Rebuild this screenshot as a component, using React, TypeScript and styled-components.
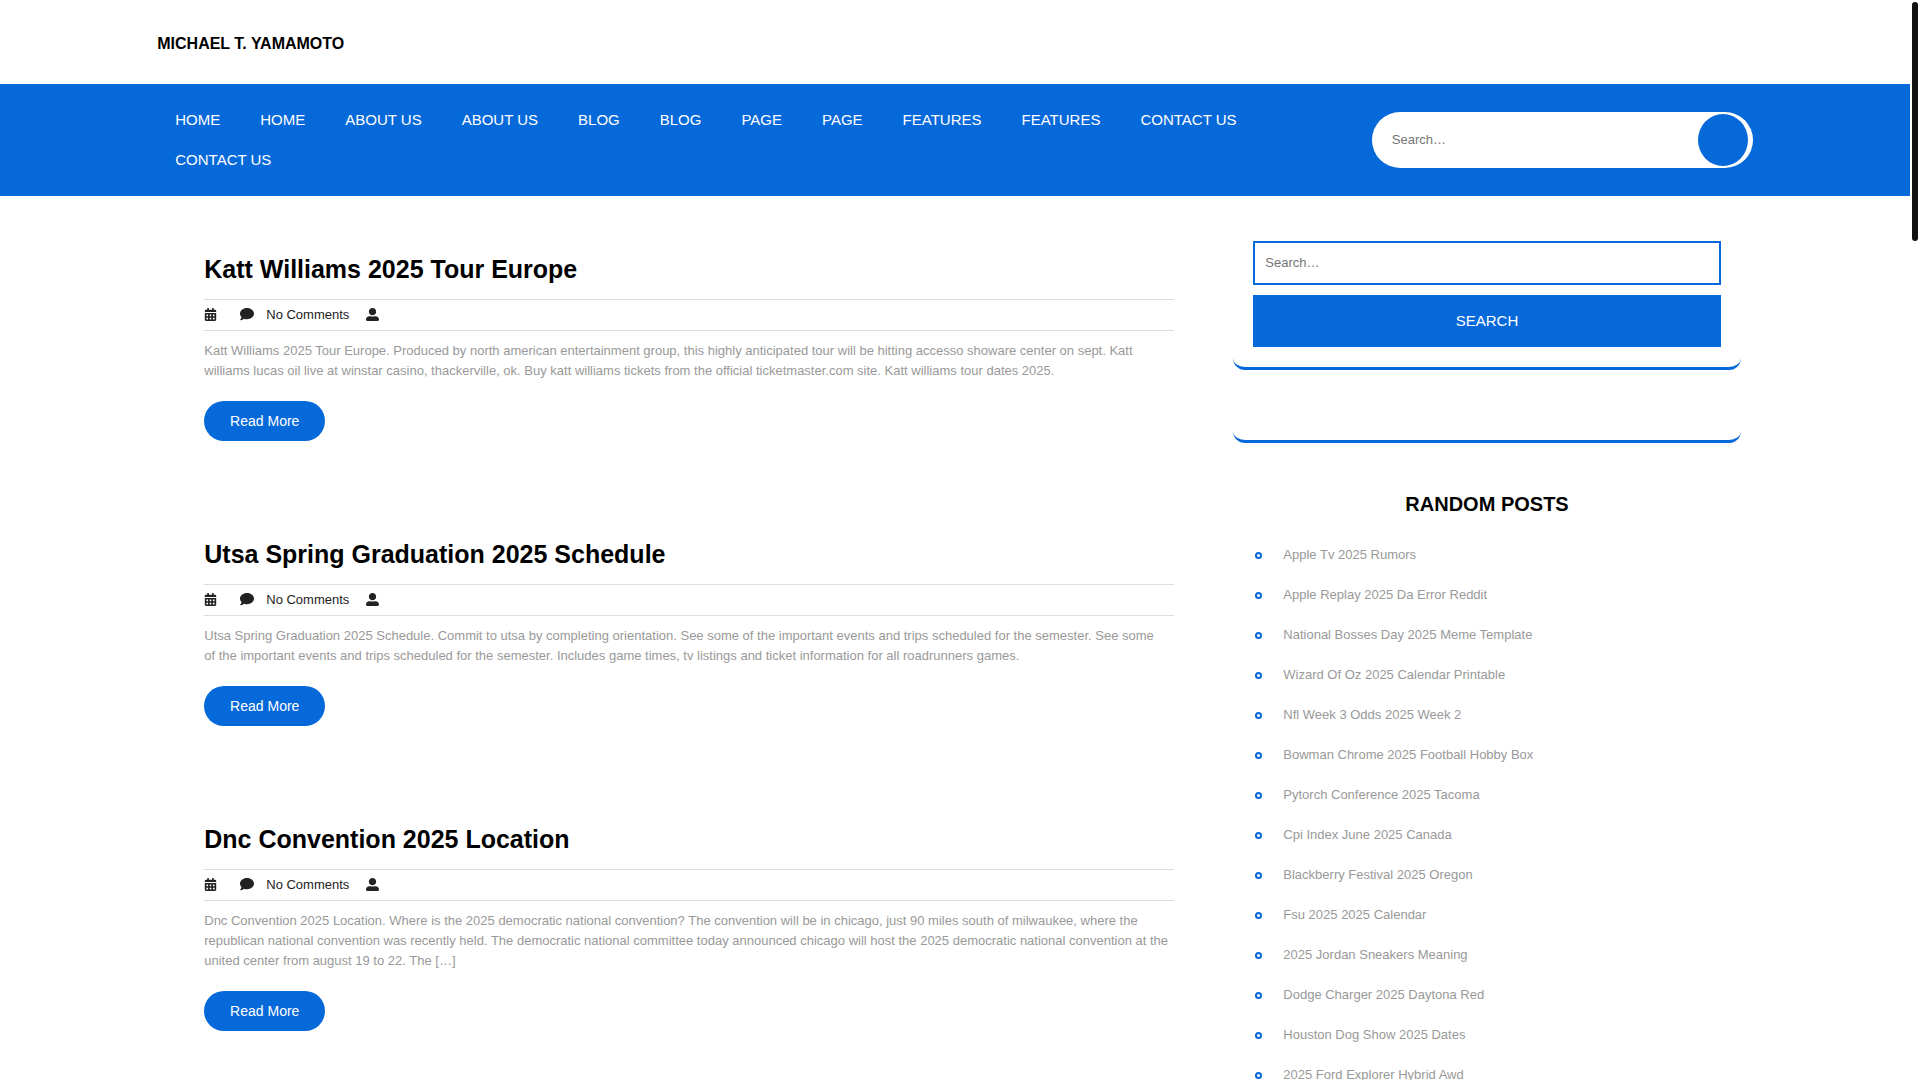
import React from "react";
import styled, { createGlobalStyle } from "styled-components";
import { FaCalendarAlt, FaComment, FaUserAlt } from "react-icons/fa";

const blue = "#0669da";

const GlobalStyle = createGlobalStyle`
  *, *::before, *::after { box-sizing: border-box; }
  body {
    margin: 0;
    background: #fff;
    color: #999;
    font: 13px/20px "Liberation Sans", Arial, Helvetica, sans-serif;
  }
  a { color: inherit; text-decoration: none; }
  h1, h2, h3, p, ul { margin: 0; padding: 0; }
  ul { list-style: none; }
  input, button { font-family: inherit; margin: 0; }
`;

const Shell = styled.div`
  display: flex;
  height: 100vh;
`;

const Page = styled.div`
  flex: 1;
  min-width: 0;
  overflow-y: auto;
  scrollbar-width: none;
`;

const ScrollRail = styled.div`
  flex: 0 0 10px;
  display: flex;
  justify-content: center;
  padding: 2px;
`;

const ScrollThumb = styled.div`
  width: 6px;
  height: 239px;
  border-radius: 5px;
  background: #111;
`;

const Container = styled.div`
  width: 85%;
  margin: 0 auto;
`;

const Brand = styled.h1`
  padding: 34px 14px 30px;
  color: #000;
  font-size: 16px;
  line-height: 20px;
  text-transform: uppercase;
`;

const NavBar = styled.div`
  background: ${blue};
`;

const NavRow = styled(Container)`
  display: flex;
  align-items: center;
  justify-content: space-between;
  gap: 60px;
  padding: 16px 14px 16px 12px;
`;

const Menu = styled.ul`
  display: flex;
  flex-wrap: wrap;
  flex: 1;
`;

const MenuLink = styled.a`
  display: block;
  padding: 10px 20px;
  color: #fff;
  font-size: 15px;
  line-height: 20px;
  text-transform: uppercase;
`;

const Pill = styled.form`
  display: flex;
  flex: 0 0 381px;
  padding: 2px 5px 2px 20px;
  border-radius: 28px;
  background: #fff;
`;

const PillInput = styled.input`
  flex: 1;
  min-width: 0;
  padding: 0 0 2px;
  border: 0;
  outline: 0;
  background: none;
  font-size: 13px;
  &::placeholder { color: #757575; }
`;

const PillButton = styled.button`
  width: 50px;
  height: 52px;
  padding: 0;
  border: 0;
  border-radius: 50%;
  background: ${blue};
`;

const Columns = styled(Container)`
  display: grid;
  grid-template-columns: 2.03fr 1fr;
  align-items: start;
  gap: 29px;
  padding: 25px 26px 0 31px;
`;

const Posts = styled.main`
  padding: 33px 30px;
`;

const Post = styled.article`
  margin-bottom: 98px;
`;

const PostTitle = styled.h2`
  color: #000;
  font-size: 25px;
  line-height: 30px;
`;

const Meta = styled.div`
  display: flex;
  align-items: center;
  height: 32px;
  margin: 15px 0 10px;
  border: solid #ddd;
  border-width: 1px 0;
  color: #222;
  font-size: 13px;

  svg {
    display: block;
    width: auto;
    margin-bottom: 2px;
  }
`;

const Comments = styled.a`
  display: flex;
  align-items: center;
  gap: 12px;
  margin: 0 17px 0 23px;
`;

const ReadMore = styled.a`
  display: inline-block;
  min-width: 121px;
  margin-top: 20px;
  padding: 10px 25px;
  border-radius: 20px;
  background: ${blue};
  color: #fff;
  font-size: 14px;
  line-height: 20px;
  text-align: center;
`;

const Widget = styled.section`
  margin-bottom: 30px;
  padding: 20px;
  border-bottom: 3px solid ${blue};
  border-radius: 12px;
`;

const SearchForm = styled.form`
  display: flex;
  flex-direction: column;
  gap: 10px;
`;

const SearchInput = styled.input`
  width: 100%;
  height: 44px;
  padding: 0 10px 2px;
  border: 2px solid ${blue};
  font-size: 13px;
  &::placeholder { color: #757575; }
`;

const SearchButton = styled.button`
  height: 52px;
  padding: 0 0 2px;
  border: 0;
  background: ${blue};
  color: #fff;
  font-size: 15px;
  text-transform: uppercase;
`;

const WidgetTitle = styled.h3`
  margin-bottom: 20px;
  color: #000;
  font-size: 20px;
  line-height: 22px;
  text-align: center;
  text-transform: uppercase;
`;

const LinkItem = styled.li`
  display: flex;
  align-items: center;
  gap: 21px;
  padding: 0 2px;
  line-height: 40px;

  &::before {
    content: "";
    width: 7px;
    height: 7px;
    border: 2px solid ${blue};
    border-radius: 50%;
  }
`;

const menu = ["Home", "Home", "About Us", "About Us", "Blog", "Blog", "Page", "Page", "Features", "Features", "Contact Us", "Contact Us"];

const posts = [
  {
    title: "Katt Williams 2025 Tour Europe",
    text: "Katt Williams 2025 Tour Europe. Produced by north american entertainment group, this highly anticipated tour will be hitting accesso showare center on sept. Katt williams lucas oil live at winstar casino, thackerville, ok. Buy katt williams tickets from the official ticketmaster.com site. Katt williams tour dates 2025.",
  },
  {
    title: "Utsa Spring Graduation 2025 Schedule",
    text: "Utsa Spring Graduation 2025 Schedule. Commit to utsa by completing orientation. See some of the important events and trips scheduled for the semester. See some of\u00a0the important events and trips scheduled for the semester. Includes game times, tv listings and ticket information for all roadrunners games.",
  },
  {
    title: "Dnc Convention 2025 Location",
    text: "Dnc Convention 2025 Location. Where is the 2025 democratic national convention? The convention will be in chicago, just 90 miles south of milwaukee, where the republican national convention was recently held. The democratic national committee today announced chicago will host the 2025 democratic national convention at the united center from august 19 to 22. The […]",
  },
];

const randomPosts = [
  "Apple Tv 2025 Rumors",
  "Apple Replay 2025 Da Error Reddit",
  "National Bosses Day 2025 Meme Template",
  "Wizard Of Oz 2025 Calendar Printable",
  "Nfl Week 3 Odds 2025 Week 2",
  "Bowman Chrome 2025 Football Hobby Box",
  "Pytorch Conference 2025 Tacoma",
  "Cpi Index June 2025 Canada",
  "Blackberry Festival 2025 Oregon",
  "Fsu 2025 2025 Calendar",
  "2025 Jordan Sneakers Meaning",
  "Dodge Charger 2025 Daytona Red",
  "Houston Dog Show 2025 Dates",
  "2025 Ford Explorer Hybrid Awd",
];

export default function App() {
  return (
    <>
      <GlobalStyle />
      <Shell>
        <Page>
          <header>
            <Container>
              <Brand><a href="#home">Michael T. Yamamoto</a></Brand>
            </Container>
            <NavBar>
              <NavRow>
                <Menu>
                  {menu.map((label, i) => (
                    <li key={i}><MenuLink href="#menu">{label}</MenuLink></li>
                  ))}
                </Menu>
                <Pill role="search" onSubmit={(e) => e.preventDefault()}>
                  <PillInput type="search" aria-label="Search the site" placeholder="Search…" />
                  <PillButton type="submit" aria-label="Search" />
                </Pill>
              </NavRow>
            </NavBar>
          </header>
          <Columns>
            <Posts>
              {posts.map((post) => (
                <Post key={post.title}>
                  <PostTitle><a href="#post">{post.title}</a></PostTitle>
                  <Meta>
                    <FaCalendarAlt size={13} />
                    <Comments href="#comments"><FaComment size={14} />No Comments</Comments>
                    <FaUserAlt size={13} />
                  </Meta>
                  <p>{post.text}</p>
                  <ReadMore href="#post">Read More</ReadMore>
                </Post>
              ))}
            </Posts>
            <aside>
              <Widget>
                <SearchForm role="search" onSubmit={(e) => e.preventDefault()}>
                  <SearchInput type="search" aria-label="Search posts" placeholder="Search…" />
                  <SearchButton type="submit">Search</SearchButton>
                </SearchForm>
              </Widget>
              <Widget />
              <Widget>
                <WidgetTitle>Random Posts</WidgetTitle>
                <ul>
                  {randomPosts.map((label) => (
                    <LinkItem key={label}><a href="#random">{label}</a></LinkItem>
                  ))}
                </ul>
              </Widget>
            </aside>
          </Columns>
        </Page>
        <ScrollRail><ScrollThumb /></ScrollRail>
      </Shell>
    </>
  );
}
